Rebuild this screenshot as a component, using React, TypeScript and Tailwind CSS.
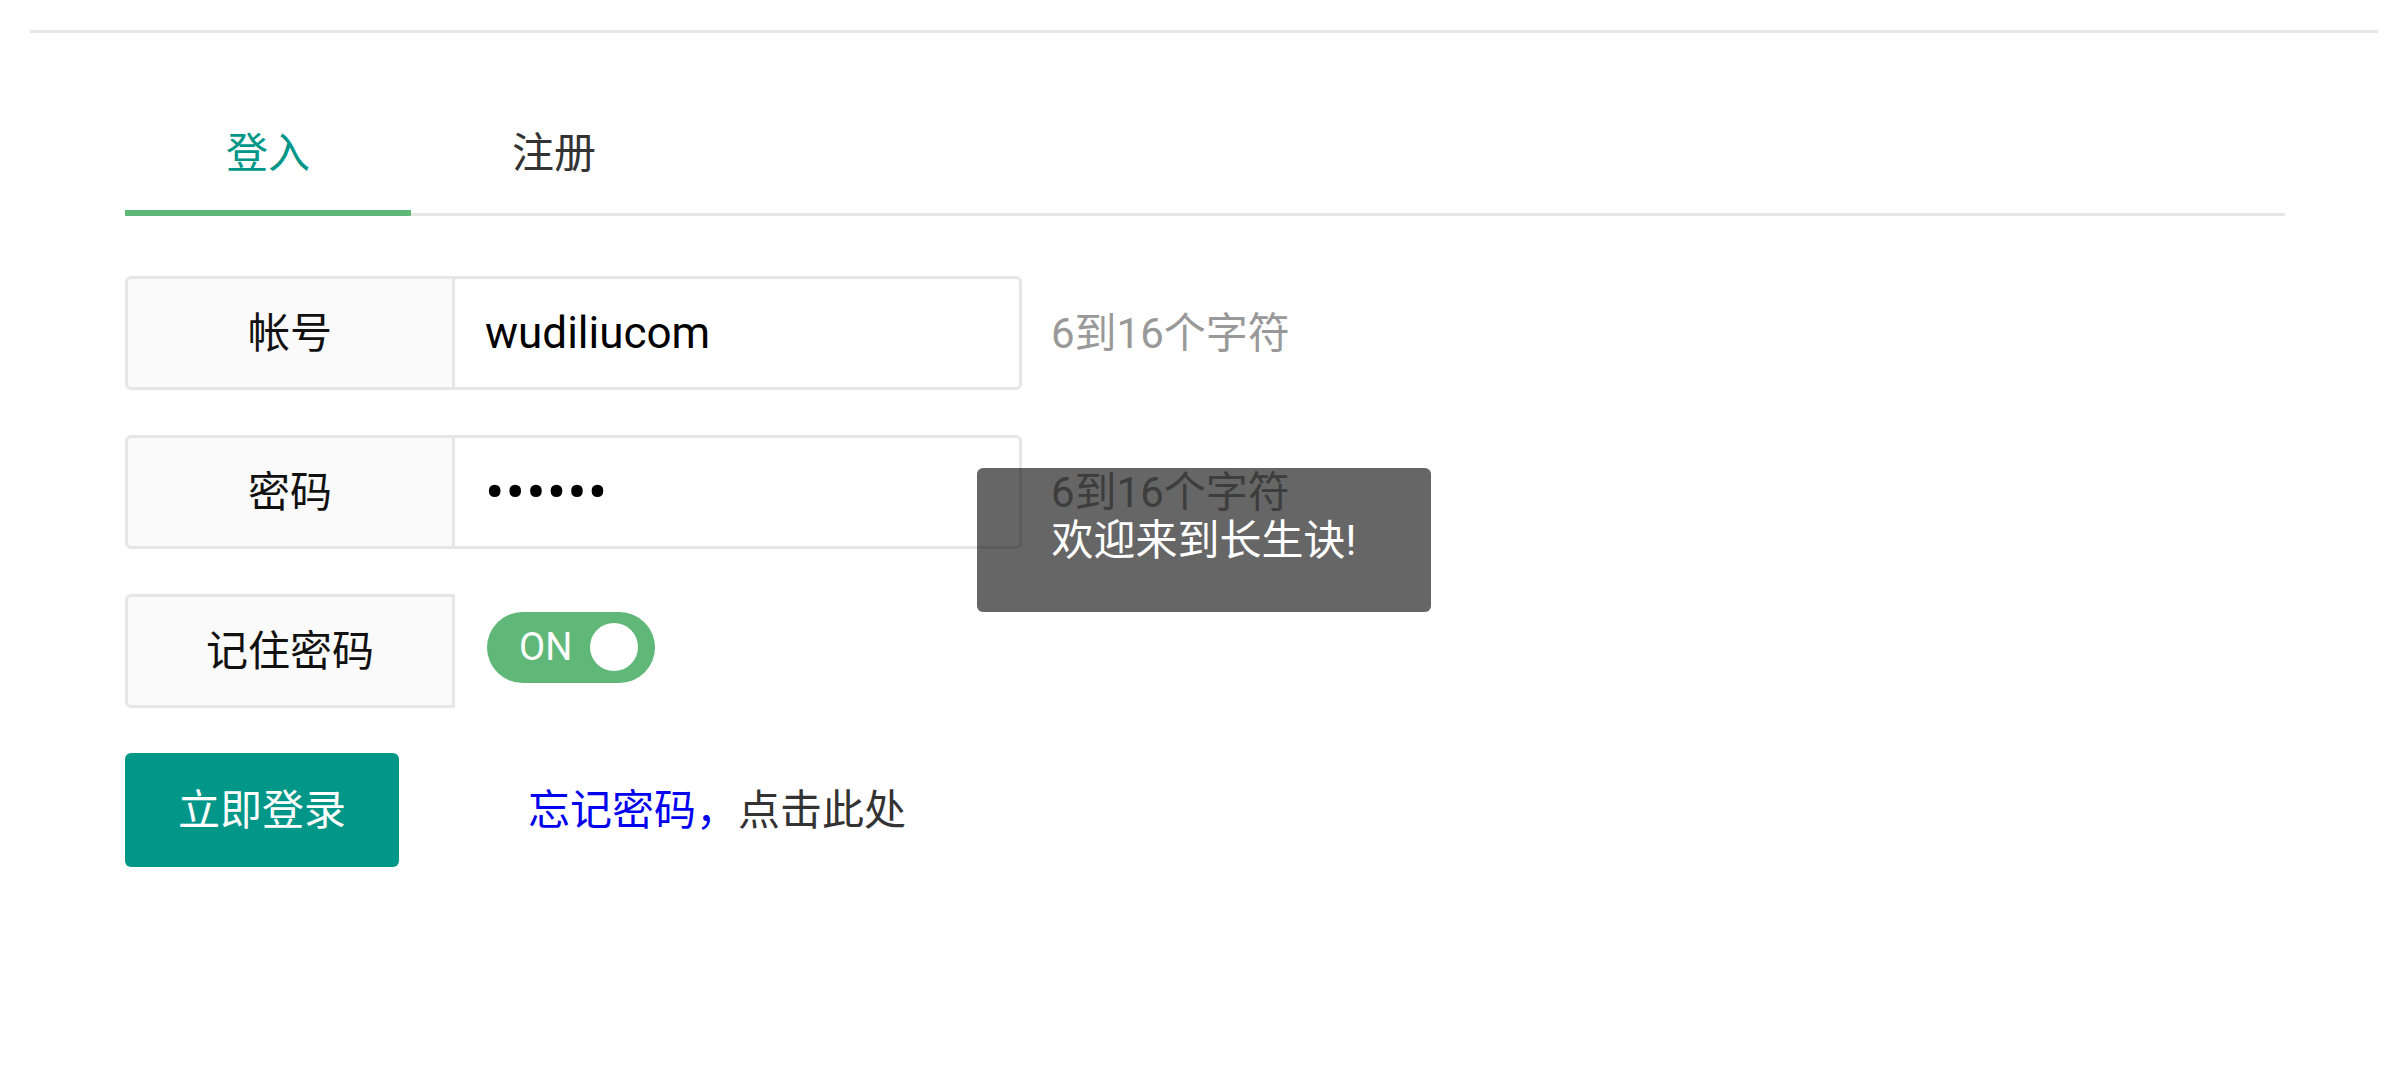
import React from "react";

function Row({
  label,
  children,
  hint,
}: {
  label: string;
  children: React.ReactNode;
  hint?: string;
}) {
  return (
    <div className="flex h-[114px] items-center">
      <div className="flex h-full w-[330px] items-center justify-center rounded-l-[6px] border-[3px] border-[#e6e6e6] bg-[#fafafa] text-[42px] text-[#111]">
        {label}
      </div>
      {children}
      {hint && <div className="ml-[29px] text-[42px] text-[#999]">{hint}</div>}
    </div>
  );
}

export default function App() {
  return (
    <div className="relative min-h-screen bg-white px-[30px] pt-[30px] font-[Roboto,'Noto_Sans_CJK_SC',sans-serif] text-[#333]">
      <div className="h-[3px] bg-[#e6e6e6]" />

      <div className="ml-[95px] mr-[93px] mt-[60px]">
        {/* tabs */}
        <div className="flex h-[123px] border-b-[3px] border-[#e6e6e6]">
          <div className="relative flex w-[286px] items-center justify-center text-[42px] text-[#009688]">
            登入
            <span className="absolute -bottom-[3px] left-0 right-0 h-[6px] bg-[#5fb878]" />
          </div>
          <div className="flex w-[286px] items-center justify-center text-[42px] text-[#333]">
            注册
          </div>
        </div>

        {/* form */}
        <form className="mt-[60px] flex flex-col gap-[45px]">
          <Row label="帐号" hint="6到16个字符">
            <input
              className="-ml-[3px] h-full w-[570px] rounded-r-[6px] border-[3px] border-[#e6e6e6] bg-white px-[30px] text-[44px] text-black outline-none"
              defaultValue="wudiliucom"
              readOnly
            />
          </Row>
          <Row label="密码" hint="6到16个字符">
            <input
              type="password"
              className="-ml-[3px] h-full w-[570px] rounded-r-[6px] border-[3px] border-[#e6e6e6] bg-white px-[30px] text-[58px] tracking-[1px] text-black outline-none"
              defaultValue="123456"
              readOnly
            />
          </Row>
          <Row label="记住密码">
            <div className="ml-[32px] flex h-[71px] w-[168px] -translate-y-[4px] items-center justify-between rounded-full bg-[#5fb878] pl-[32px] pr-[17px]">
              <span className="text-[38px] leading-none text-white">ON</span>
              <span className="h-[48px] w-[48px] rounded-full bg-white" />
            </div>
          </Row>
          <div className="flex h-[114px] items-center">
            <button
              type="button"
              className="h-full w-[274px] rounded-[6px] bg-[#009688] text-[42px] text-white"
            >
              立即登录
            </button>
            <div className="ml-[129px] text-[42px]">
              <a className="text-[#0000ee]">忘记密码，</a>
              <span className="text-[#333]">点击此处</span>
            </div>
          </div>
        </form>
      </div>

      {/* toast */}
      <div className="absolute left-[977px] top-[468px] flex h-[144px] w-[454px] items-center justify-center rounded-[6px] bg-black/60 text-[42px] text-white">
        欢迎来到长生诀!
      </div>
    </div>
  );
}
